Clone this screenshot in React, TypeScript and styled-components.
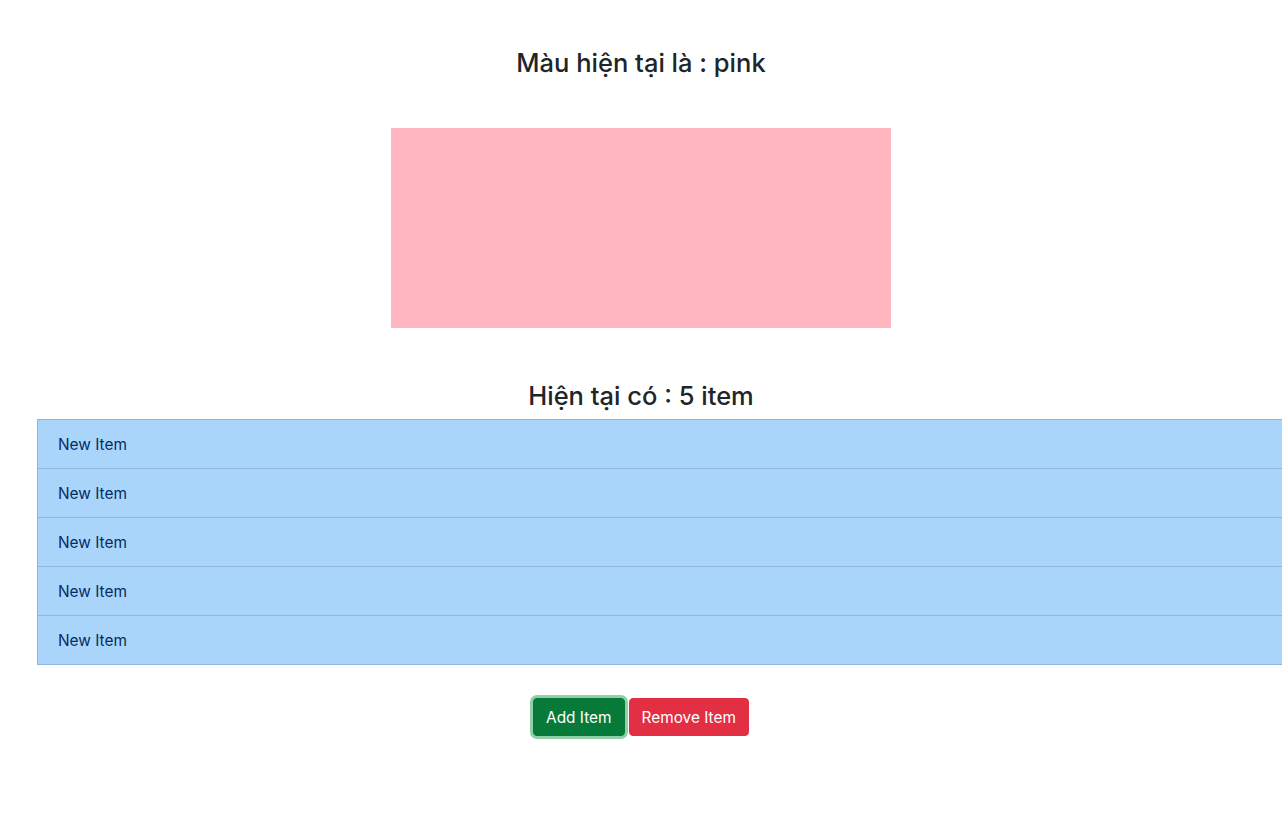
import React, { useState } from "react";
import styled, { createGlobalStyle } from "styled-components";

const GlobalStyle = createGlobalStyle`
  html { overflow-x: hidden; }
  body {
    margin: 0;
    background: #fff;
    color: #212529;
    font-family: Inter, "Noto Sans", "Liberation Sans", sans-serif;
    font-size: 16px;
    line-height: 1.5;
  }
  * { box-sizing: border-box; }
`;

const Page = styled.div`
  display: flex;
  flex-direction: column;
  align-items: center;
  padding-top: 48px;
  padding-bottom: 80px;
`;

const Title = styled.h4<{ $gap: number }>`
  margin: 0 0 ${(p) => p.$gap}px;
  font-size: 25.5px;
  font-weight: 500;
  line-height: 29px;
  color: #212529;
  text-align: center;
`;

const ColorBox = styled.div<{ $color: string }>`
  width: 500px;
  height: 200px;
  background: ${(p) => p.$color};
  margin-bottom: 53px;
`;

const ListGroup = styled.ul`
  align-self: stretch;
  margin: 0 0 33px 37px;
  padding: 0;
  list-style: none;
  width: calc(100% + 20px);
  display: flex;
  flex-direction: column;
`;

const ListItem = styled.li`
  padding: 12.5px 20px 11.5px;
  background: #aad5fb;
  color: #052c65;
  border: 1px solid #91b6dc;
  font-size: 15.4px;
  line-height: 24px;
  & + & {
    border-top: 0;
  }
`;

const ButtonRow = styled.div`
  display: flex;
  gap: 4px;
`;

const Button = styled.button<{ $variant: "success" | "danger"; $focused?: boolean }>`
  font-family: inherit;
  font-size: 15.4px;
  line-height: 24px;
  padding: 6.5px 12px 5.5px;
  border-radius: 4px;
  border: 1px solid ${(p) => (p.$variant === "success" ? "#077a3a" : "#e22f43")};
  background: ${(p) => (p.$variant === "success" ? "#077a3a" : "#e22f43")};
  color: #fff;
  cursor: pointer;
  box-shadow: ${(p) => (p.$focused ? "0 0 0 3px #8fd0a8" : "none")};
`;

export default function App() {
  const [items, setItems] = useState<string[]>(Array(5).fill("New Item"));
  return (
    <>
      <GlobalStyle />
      <Page>
        <Title $gap={51}>Màu hiện tại là : pink</Title>
        <ColorBox $color="#ffb6c1" />
        <Title $gap={9}>Hiện tại có : {items.length} item</Title>
        <ListGroup>
          {items.map((it, i) => (
            <ListItem key={i}>{it}</ListItem>
          ))}
        </ListGroup>
        <ButtonRow>
          <Button $variant="success" $focused onClick={() => setItems([...items, "New Item"])}>
            Add Item
          </Button>
          <Button $variant="danger" onClick={() => setItems(items.slice(0, -1))}>
            Remove Item
          </Button>
        </ButtonRow>
      </Page>
    </>
  );
}
